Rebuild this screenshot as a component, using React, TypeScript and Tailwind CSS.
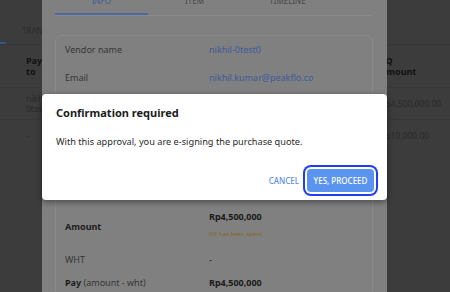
import React from 'react';

const rows: { label: string; value: string; link?: boolean }[] = [
  { label: 'Vendor name', value: 'nikhil-0test0', link: true },
  { label: 'Email', value: 'nikhil.kumar@peakflo.co', link: true },
  { label: 'Phone', value: '-' },
  { label: 'Quote number', value: 'PQ-0001' },
  { label: 'Quote date', value: '-' },
  { label: 'Currency', value: 'IDR' },
];

export default function App() {
  return (
    <div className="relative h-[292px] w-[450px] overflow-hidden bg-[#3c3c3c] font-['Noto_Sans',sans-serif]">
      {/* Page behind the drawer */}
      <div className="pt-[17px]">
        <div className="flex h-[28px] items-center border-b border-[#363636]">
          <div className="h-full w-[6px] border-b-2 border-[#3b5585]"></div>
          <div className="pl-[16px] text-[8px] text-[#2c2c2c]">TRANSACTIONS</div>
        </div>
        <div className="grid h-[43px] grid-cols-[354px_1fr] items-center border-b border-[#383838] pl-[26px] text-[9px] font-bold leading-[11px] text-[#121212]">
          <div>
            Pay
            <br />
            to
          </div>
          <div>
            PQ
            <br />
            Amount
          </div>
        </div>
        <div className="grid h-[32px] grid-cols-[354px_1fr] items-center border-b border-[#383838] pl-[26px] text-[8.5px] leading-[10px] text-[#2a2a2a]">
          <div>
            nikhil-
            <br />
            0test0
          </div>
          <div>Rp4,500,000.00</div>
        </div>
        <div className="grid h-[32px] grid-cols-[354px_1fr] items-center pl-[26px] text-[8.5px] leading-[10px] text-[#2a2a2a]">
          <div>-</div>
          <div>Rp10,000.00</div>
        </div>
      </div>

      {/* Drawer */}
      <div className="absolute bottom-0 left-[42px] top-0 w-[345px] bg-[#808080] pl-[13px] pr-[14px]">
        <div className="-mt-[5px] flex border-b border-[#8a8a8a] text-[8px] leading-[12px]">
          <div className="h-[20px] w-[93px] border-b-2 border-[#4c68a2] text-center text-[#3f5d9c]">INFO</div>
          <div className="h-[20px] w-[93px] text-center text-[#474747]">ITEM</div>
          <div className="h-[20px] w-[93px] text-center text-[#474747]">TIMELINE</div>
        </div>

        <div className="mt-[19px] rounded-[6px] border border-[#8a8a8a] pl-[9px] text-[9px]">
          {rows.map((r) => (
            <div key={r.label} className="flex h-[28px] items-center">
              <div className="w-[144px] text-[#363636]">{r.label}</div>
              <div className={r.link ? 'text-[#3d5c9c]' : 'text-[#1c1c1c]'}>{r.value}</div>
            </div>
          ))}
          <div className="flex h-[46px] items-center">
            <div className="w-[144px] font-bold text-[#1c1c1c]">Amount</div>
            <div className="flex flex-col self-start pt-[7px]">
              <div className="font-bold leading-[12px] text-[#1a1a1a]">Rp4,500,000</div>
              <div className="mt-[7px] text-[6px] leading-[8px] text-[#8a6420]">0% has been spent</div>
            </div>
          </div>
          <div className="flex h-[20px] items-center">
            <div className="w-[144px] text-[#363636]">WHT</div>
            <div className="text-[#1c1c1c]">-</div>
          </div>
          <div className="flex h-[26px] items-center">
            <div className="w-[144px] text-[#363636]">
              <span className="font-bold text-[#1c1c1c]">Pay</span> (amount - wht)
            </div>
            <div className="font-bold text-[#1a1a1a]">Rp4,500,000</div>
          </div>
        </div>
      </div>

      {/* Confirmation dialog */}
      <div className="absolute left-[42px] top-[94px] w-[345px] rounded-[4px] bg-white pb-[8px] pl-[14px] pr-[13px] pt-[12px] shadow-[0_2px_6px_rgba(0,0,0,0.45)]">
        <div className="text-[11px] font-bold leading-[14px] text-[#1b1b1b]">Confirmation required</div>
        <div className="mt-[16px] text-[9.2px] leading-[12px] text-[#2a2a2a]">
          With this approval, you are e-signing the purchase quote.
        </div>
        <div className="mt-[21px] flex items-center justify-end gap-[4px]">
          <button className="h-[23px] px-[4px] text-[8px] font-medium text-[#5a8ee8]">CANCEL</button>
          <button className="flex h-[23px] w-[67px] items-center justify-center rounded-[4px] bg-[#5b94ee] text-[8px] font-medium text-white ring-2 ring-[#1f3ef2] ring-offset-2">
            YES, PROCEED
          </button>
        </div>
      </div>
    </div>
  );
}
